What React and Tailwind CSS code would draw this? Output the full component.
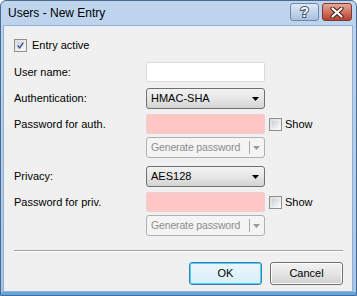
import React from 'react';

const font = { fontFamily: '"Liberation Sans", Arial, sans-serif' };

const CheckBox = ({ checked }) => (
  <div className="w-[13px] h-[13px] border border-[#8e8f8f] bg-linear-to-br from-[#dcdcdc] to-[#fbfbfb] p-[2px] shrink-0">
    <div className="w-full h-full bg-linear-to-br from-[#cbcfd5] to-[#f6f6f6] flex items-center justify-center">
      {checked && (
        <svg width="9" height="9" viewBox="0 0 9 9">
          <path d="M1 4.5 L3.5 7.5 L8 0.8" fill="none" stroke="#3c5398" strokeWidth="1.8" />
        </svg>
      )}
    </div>
  </div>
);

const Label = ({ children }) => (
  <div className="w-[132px] shrink-0 text-[11px] text-black leading-none">{children}</div>
);

const TextBox = ({ pink }) => (
  <div
    className={
      pink
        ? 'w-[119px] h-[20px] rounded-[2px] border border-[#e9d2d2] bg-[#ffc6c6]'
        : 'w-[119px] h-[20px] rounded-[2px] border border-[#d8dadd] bg-white'
    }
  />
);

const Combo = ({ value }) => (
  <div className="w-[119px] h-[21px] rounded-[3px] border border-[#707070] bg-linear-to-b from-[#f3f3f3] via-[#e6e6e6] to-[#d3d3d3] flex items-center pl-[4px] pr-[5px]">
    <span className="flex-1 text-[11px] text-black">{value}</span>
    <svg width="7" height="4" viewBox="0 0 7 4">
      <path d="M0 0 H7 L3.5 4 Z" fill="#000" />
    </svg>
  </div>
);

const Generate = () => (
  <div className="w-[119px] h-[21px] rounded-[3px] border border-[#adb2b5] bg-[#f4f4f4] flex items-center pl-[4px]">
    <span className="flex-1 text-[10.5px] tracking-[-0.15px] text-[#8d8d8d] whitespace-nowrap overflow-hidden">Generate password</span>
    <div className="w-px h-[13px] bg-[#a8a8a8] ml-[2px] mr-[3px] shrink-0" />
    <svg width="7" height="4" viewBox="0 0 7 4" className="mr-[4px] shrink-0">
      <path d="M0 0 H7 L3.5 4 Z" fill="#9a9a9a" />
    </svg>
  </div>
);

const Show = () => (
  <div className="flex items-center ml-[4px] gap-[3px]">
    <CheckBox />
    <span className="text-[11px] text-black">Show</span>
  </div>
);

const Button = ({ children, primary }) => (
  <div
    className={
      primary
        ? 'w-[73px] h-[23px] rounded-[3px] border border-[#3c7fb1] bg-linear-to-b from-[#eaf6fd] to-[#d9eefa] shadow-[inset_0_0_0_1px_#48d2fb] flex items-center justify-center text-[11px] text-black'
        : 'w-[73px] h-[23px] rounded-[3px] border border-[#707070] bg-linear-to-b from-[#f2f2f2] via-[#e5e5e5] to-[#d0d0d0] shadow-[inset_0_0_0_1px_#fcfcfc] flex items-center justify-center text-[11px] text-black'
    }
  >
    {children}
  </div>
);

export default function App() {
  return (
    <div style={font} className="w-[357px] h-[296px] flex flex-col border border-[#4a6a92] rounded-t-[6px] bg-linear-to-b from-[#bfd5ee] to-[#a9c5e6] overflow-hidden">
      {/* title bar */}
      <div className="h-[24px] flex items-start shrink-0">
        <span className="ml-[7px] mt-[6px] text-[12px] text-black leading-none">Users - New Entry</span>
        <div className="ml-auto mt-[2px] mr-[4px] flex gap-[3px]">
          <div className="w-[29px] h-[18px] rounded-[3px] border border-[#6d87a8] bg-linear-to-b from-[#dde8f4] via-[#c3d5ea] to-[#a9c0dc] flex items-center justify-center">
            <span className="text-[14px] font-bold leading-none text-white [paint-order:stroke_fill] [-webkit-text-stroke:2px_#44546a]">?</span>
          </div>
          <div className="w-[30px] h-[18px] rounded-[3px] border border-[#7a3a32] bg-linear-to-b from-[#e5a896] via-[#d0735f] to-[#b8402c] flex items-center justify-center">
            <svg width="14" height="11" viewBox="0 0 14 11">
              <path d="M2.5 1.5 L11.5 9.5 M11.5 1.5 L2.5 9.5" stroke="#3d2320" strokeWidth="4.2" strokeLinecap="round" />
              <path d="M2.5 1.5 L11.5 9.5 M11.5 1.5 L2.5 9.5" stroke="#ffffff" strokeWidth="2.2" strokeLinecap="round" />
            </svg>
          </div>
        </div>
      </div>

      {/* client */}
      <div className="flex-1 ml-[2px] mr-[3px] border border-[#8eb0d6] bg-[#f0f0f0] flex flex-col pl-[10px] pr-[9px]">
        <div className="mt-[13px] h-[13px] flex items-center gap-[5px]">
          <CheckBox checked />
          <span className="text-[11px] text-black">Entry active</span>
        </div>

        <div className="mt-[10px] flex items-center">
          <Label>User name:</Label>
          <TextBox />
        </div>
        <div className="mt-[6px] flex items-center">
          <Label>Authentication:</Label>
          <Combo value="HMAC-SHA" />
        </div>
        <div className="mt-[5px] flex items-center">
          <Label>Password for auth.</Label>
          <TextBox pink />
          <Show />
        </div>
        <div className="mt-[3px] flex items-center">
          <div className="w-[132px]" />
          <Generate />
        </div>

        <div className="mt-[8px] flex items-center">
          <Label>Privacy:</Label>
          <Combo value="AES128" />
        </div>
        <div className="mt-[5px] flex items-center">
          <Label>Password for priv.</Label>
          <TextBox pink />
          <Show />
        </div>
        <div className="mt-[3px] flex items-center">
          <div className="w-[132px]" />
          <Generate />
        </div>

        <div className="mt-[14px] border-t border-[#a0a0a0] border-b border-b-white" />

        <div className="mt-[10px] flex justify-end gap-[8px]">
          <Button primary>OK</Button>
          <Button>Cancel</Button>
        </div>
      </div>
      <div className="h-[3px] shrink-0 bg-[#5fa8de]" />
    </div>
  );
}
